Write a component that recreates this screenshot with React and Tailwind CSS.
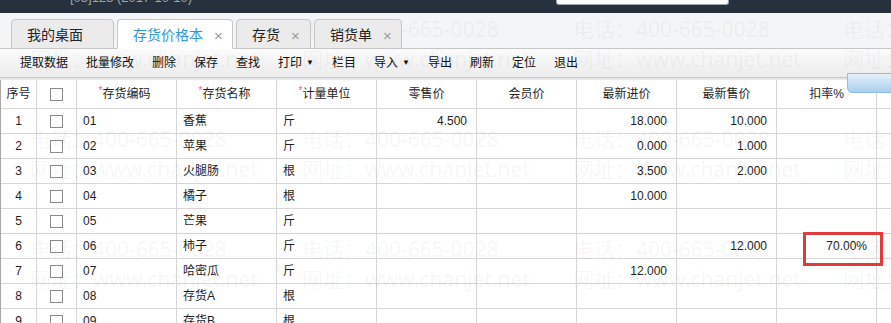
import React from "react";

const FONT = { fontFamily: '"Liberation Sans", Arial, "Noto Sans CJK SC", sans-serif' };

const cols = [36, 40, 100, 100, 100, 100, 100, 100, 100, 100, 100];

const rows = [
  ["1", "01", "香蕉", "斤", "4.500", "", "18.000", "10.000", ""],
  ["2", "02", "苹果", "斤", "", "", "0.000", "1.000", ""],
  ["3", "03", "火腿肠", "根", "", "", "3.500", "2.000", ""],
  ["4", "04", "橘子", "根", "", "", "10.000", "", ""],
  ["5", "05", "芒果", "斤", "", "", "", "", ""],
  ["6", "06", "柿子", "斤", "", "", "", "12.000", "70.00%"],
  ["7", "07", "哈密瓜", "斤", "", "", "12.000", "", ""],
  ["8", "08", "存货A", "根", "", "", "", "", ""],
  ["9", "09", "存货B", "根", "", "", "", "", ""],
];

function Tab({ label, w, active, close }) {
  return (
    <div
      className={
        "box-border h-[30px] flex items-center pt-[3px] pl-[15px] rounded-t-[4px] border border-[#c6c6c6] text-[14px] " +
        (active ? "bg-white border-b-white text-[#2f95d6] z-10" : "bg-[#ebebeb] text-[#222]")
      }
      style={{ width: w }}
    >
      <span>{label}</span>
      {close && <span className="ml-[11px] text-[#9a9a9a] text-[15px] leading-none">×</span>}
    </div>
  );
}

function Check() {
  return <div className="w-[13px] h-[13px] border border-[#8a8a8a] bg-white" />;
}

export default function App() {
  const wm = [];
  [30, 140, 250].forEach((y) => {
    [30, 302, 573, 843].forEach((x) => {
      wm.push(
        <div key={`p${x}-${y}`} className="absolute whitespace-nowrap text-[21px] leading-none" style={{ left: x, top: y - 11 }}>
          电话：400-665-0028
        </div>
      );
      wm.push(
        <div key={`n${x}-${y}`} className="absolute whitespace-nowrap text-[21px] leading-none" style={{ left: x, top: y + 19 }}>
          网址：www.chanjet.net
        </div>
      );
    });
  });

  return (
    <div className="relative w-[891px] h-[323px] overflow-hidden bg-[#f4f5f6] text-[#1e1e1e]" style={FONT}>
      {/* top dark bar */}
      <div className="h-[13px] bg-[#27313d] flex overflow-hidden relative">
        <div className="ml-[70px] -mt-[12px] text-[13px] text-[#9ea4ab] whitespace-nowrap">[03]123 (2017-10-10)</div>
        <div className="ml-auto mr-[162px] w-[173px] h-[5px] bg-white rounded-b-[3px] border border-t-0 border-[#9aa3ad]" />
      </div>

      {/* tabs */}
      <div className="h-[6px]" />
      <div className="flex items-end pl-[11px] gap-[3px] h-[30px] relative z-10 -mb-px">
        <Tab label="我的桌面" w={103} />
        <Tab label="存货价格本" w={116} active close />
        <Tab label="存货" w={75} close />
        <Tab label="销货单" w={88} close />
      </div>

      {/* toolbar */}
      <div className="box-border h-[29px] border-t border-[#c6c6c6] bg-gradient-to-b from-[#fbfbfb] to-[#ececec] flex items-center pl-[20px] gap-[18px] text-[12px] text-[#111]">
        <span>提取数据</span>
        <span>批量修改</span>
        <span>删除</span>
        <span>保存</span>
        <span>查找</span>
        <span className="flex items-center">打印<span className="ml-[4px] text-[8px]">▼</span></span>
        <span>栏目</span>
        <span className="flex items-center">导入<span className="ml-[4px] text-[8px]">▼</span></span>
        <span>导出</span>
        <span>刷新</span>
        <span>定位</span>
        <span>退出</span>
      </div>
      <div className="h-[3px] border-t border-[#c9c9c9] bg-gradient-to-b from-[#dedede] to-[#f2f2f2]" />

      {/* table */}
      <div className="bg-white border-l border-[#a9a9a9] text-[12px] h-[300px]">
        <div className="flex h-[29px]">
          {["序号", "", "存货编码", "存货名称", "计量单位", "零售价", "会员价", "最新进价", "最新售价", "扣率%", ""].map((h, i) => (
            <div
              key={i}
              className="box-border shrink-0 border-r border-b border-[#d6d6d6] flex items-center justify-center"
              style={{ width: cols[i] }}
            >
              {i === 1 ? (
                <Check />
              ) : (
                <span className="relative">
                  {(i === 2 || i === 3 || i === 4) && (
                    <span className="text-[#e8678f] text-[10px] absolute -left-[4px] -top-[2px]">*</span>
                  )}
                  {h}
                </span>
              )}
            </div>
          ))}
        </div>
        {rows.map((r, ri) => (
          <div key={ri} className="flex h-[25px]">
            <div className="box-border shrink-0 w-[36px] border-r border-b border-[#d6d6d6] flex items-center justify-center">{r[0]}</div>
            <div className="box-border shrink-0 w-[40px] border-r border-b border-[#d6d6d6] flex items-center justify-center">
              <Check />
            </div>
            {r.slice(1, 4).map((c, ci) => (
              <div key={ci} className="box-border shrink-0 w-[100px] border-r border-b border-[#d6d6d6] flex items-center pl-[6px]">
                {c}
              </div>
            ))}
            {r.slice(4, 9).map((c, ci) => (
              <div key={ci} className="box-border shrink-0 w-[100px] border-r border-b border-[#d6d6d6] flex items-center justify-end pr-[9px]">
                {c}
              </div>
            ))}
            <div className="box-border shrink-0 w-[100px] border-r border-b border-[#d6d6d6]" />
          </div>
        ))}
      </div>

      {/* watermark overlay */}
      <div className="absolute inset-0 pointer-events-none text-[rgba(0,0,0,0.055)]" style={{ fontFamily: '"Noto Sans", "Noto Sans CJK SC", sans-serif' }}>
        {wm}
      </div>

      {/* red highlight box */}
      <div className="absolute left-[803px] top-[232px] w-[80px] h-[34px] border-[3px] border-[#e23b3b] pointer-events-none" />

      {/* blue corner tab */}
      <div className="absolute left-[847px] top-[73px] w-[50px] h-[20px] rounded-bl-[5px] border border-[#94bde3] bg-gradient-to-b from-[#e6f1fb] to-[#a9cdee]" />
    </div>
  );
}
